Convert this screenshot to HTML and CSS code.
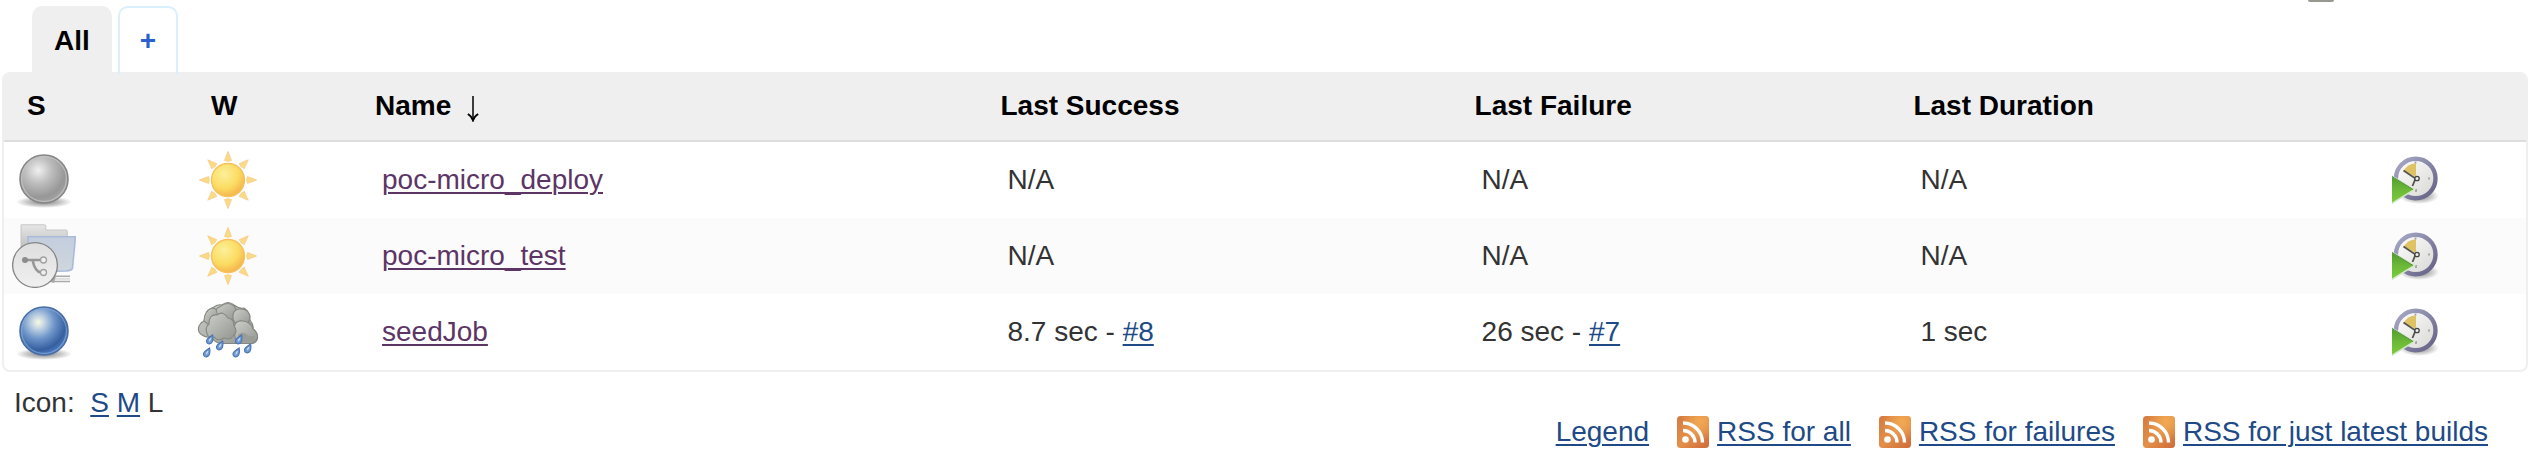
FILE: index.html
```html
<!DOCTYPE html>
<html lang="en">
<head>
<meta charset="utf-8">
<title>All jobs</title>
<link rel="stylesheet" href="styles.css">
</head>
<body>
<svg class="defs" width="0" height="0" aria-hidden="true">
  <defs>
    <radialGradient id="grayBall" cx="38%" cy="32%" r="70%"><stop offset="0" stop-color="#f0f0f0"/><stop offset=".4" stop-color="#bdbdbd"/><stop offset=".8" stop-color="#979797"/><stop offset="1" stop-color="#a4a4a4"/></radialGradient>
    <radialGradient id="blueBall" cx="38%" cy="32%" r="70%"><stop offset="0" stop-color="#fafae4"/><stop offset=".2" stop-color="#c0d2e2"/><stop offset=".48" stop-color="#6f96ca"/><stop offset=".82" stop-color="#355f9f"/><stop offset="1" stop-color="#4c7cc0"/></radialGradient>
    <radialGradient id="shade"><stop offset="0" stop-color="#000" stop-opacity=".5"/><stop offset=".6" stop-color="#000" stop-opacity=".22"/><stop offset="1" stop-color="#000" stop-opacity="0"/></radialGradient>
    <radialGradient id="sunCore" cx="38%" cy="32%" r="72%"><stop offset="0" stop-color="#fbf09a"/><stop offset=".6" stop-color="#fbdc62"/><stop offset="1" stop-color="#f5b04c"/></radialGradient>
    <linearGradient id="tabGray" x1="0" y1="0" x2="0" y2="1"><stop offset="0" stop-color="#e6e6e6"/><stop offset="1" stop-color="#b4b4b4"/></linearGradient>
    <linearGradient id="panel" x1="0" y1="0" x2="0" y2="1"><stop offset="0" stop-color="#c3cddd"/><stop offset="1" stop-color="#d0d6dd"/></linearGradient>
    <linearGradient id="disc" x1="0" y1="0" x2="0" y2="1"><stop offset="0" stop-color="#dedede"/><stop offset="1" stop-color="#f0f0f0"/></linearGradient>
    <linearGradient id="puff" x1="0" y1="0" x2="1" y2="1"><stop offset="0" stop-color="#cdcfcb"/><stop offset="1" stop-color="#92958f"/></linearGradient>
    <linearGradient id="ring" x1="0" y1="0" x2="1" y2="1"><stop offset="0" stop-color="#a9abc8"/><stop offset="1" stop-color="#625f83"/></linearGradient>
    <linearGradient id="face" x1="0" y1="0" x2="1" y2="1"><stop offset="0" stop-color="#ffffff"/><stop offset="1" stop-color="#d6d6d3"/></linearGradient>
    <linearGradient id="play" x1="0" y1="0" x2="0" y2="1"><stop offset="0" stop-color="#4f9a2c"/><stop offset=".5" stop-color="#6cb838"/><stop offset="1" stop-color="#7ccf3c"/></linearGradient>
    <linearGradient id="feed" x1="0" y1="0" x2="1" y2="1"><stop offset="0" stop-color="#d47a40"/><stop offset=".5" stop-color="#e39049"/><stop offset="1" stop-color="#cf6a3a"/></linearGradient>
    <radialGradient id="feedGlow" cx="72%" cy="18%" r="60%"><stop offset="0" stop-color="#f2a953"/><stop offset="1" stop-color="#f2a953" stop-opacity="0"/></radialGradient>
  </defs>
  <symbol id="ball-gray" viewBox="0 0 64 64">
    <ellipse cx="32" cy="54" rx="28" ry="6" fill="url(#shade)"/>
    <circle cx="32" cy="31" r="24" fill="url(#grayBall)" stroke="#868686" stroke-width="1.6"/>
    <circle cx="32" cy="31" r="22.4" fill="none" stroke="#c9c9c9" stroke-width="1.2" opacity=".7"/>
  </symbol>
  <symbol id="ball-blue" viewBox="0 0 64 64">
    <ellipse cx="32" cy="54" rx="28" ry="6" fill="url(#shade)"/>
    <circle cx="32" cy="31" r="24" fill="url(#blueBall)" stroke="#4a6ea6" stroke-width="1.6"/>
    <circle cx="32" cy="31" r="22.4" fill="none" stroke="#86a9d8" stroke-width="1.2" opacity=".75"/>
  </symbol>
  <symbol id="folder" viewBox="0 0 64 64">
    <path d="M9 .8H32.500Q33.800 .8 33.800 2V6H54Q55.300 6 55.300 7.300V30H9z" fill="url(#tabGray)" stroke="#c6c6c6"/>
    <path d="M40 52.300H58M42 57.500H58" stroke="#aaaaaa" stroke-width="1.600"/>
    <path d="M40 54.800H58" stroke="#dedede" stroke-width="2"/>
    <path d="M36 50l8 2-2 7-8-2z" fill="#a8a8a8"/>
    <path d="M16 12.800H63.500L60.500 44Q60 46.500 54 47L17 48z" fill="url(#panel)" stroke="#a9bbdb" stroke-width="1.600"/>
    <circle cx="23" cy="41" r="22.400" fill="url(#disc)" stroke="#858585" stroke-width="1.300"/>
    <path d="M13 36H28M20.500 36Q23 48 29 48.500" fill="none" stroke="#969696" stroke-width="2.600"/>
    <circle cx="13" cy="36" r="3" fill="#8c8c8c"/>
    <circle cx="31.500" cy="36" r="3" fill="#f0f0f0" stroke="#a0a0a0" stroke-width="1.300"/>
    <circle cx="31.500" cy="48.500" r="3" fill="#f0f0f0" stroke="#a0a0a0" stroke-width="1.300"/>
  </symbol>
  <symbol id="ray" viewBox="0 0 64 64"><path d="M32 3.500L28.600 12.500Q32 14 35.400 12.500z" fill="#fadb85" stroke="#f9d08c" stroke-width="1" stroke-linejoin="round"/></symbol>
  <symbol id="sun" viewBox="0 0 64 64">
    <use href="#ray"/><use href="#ray" transform="rotate(45 32 32)"/><use href="#ray" transform="rotate(90 32 32)"/><use href="#ray" transform="rotate(135 32 32)"/><use href="#ray" transform="rotate(180 32 32)"/><use href="#ray" transform="rotate(225 32 32)"/><use href="#ray" transform="rotate(270 32 32)"/><use href="#ray" transform="rotate(315 32 32)"/>
    <circle cx="32" cy="32" r="16.500" fill="url(#sunCore)" stroke="#f5c25c" stroke-width="1.400"/>
  </symbol>
  <symbol id="drop" viewBox="0 0 10 12"><path d="M8.500 1Q9.500 7 7.500 9.500 5 12 2.500 10 .5 7.500 3 5 5.500 3 8.500 1z" fill="#6f9ad2" stroke="#4873b5" stroke-width="1.200"/><path d="M6.800 4.500Q5 6 5 8" stroke="#c9dcf2" stroke-width="1.500" fill="none"/></symbol>
  <symbol id="rain" viewBox="0 0 64 64">
    <g fill="url(#puff)" stroke="#858882" stroke-width="1.100">
      <path d="M6 35Q1 32 3 26 5 22 8 21 10 10 18 7 22 4 26 5 32 0 38 5 43 9 48 8 54 12 54 20 58 25 57 29 62 33 61.500 38 60 44 54 43.500H24Q18 42 15 37 10 38 6 35z"/>
      <path d="M19 17Q17 9 25 6 32 1 38 6 42 10 38 18 32 23 25 20z"/>
      <path d="M37 19Q36 10 43 9 52 8 54 16 54 23 48 26 40 27 37 19z"/>
      <path d="M8 21Q8 11 16 8 22 8 21 16 15 20 13 25z"/>
      <path d="M38 29Q38 20 47 21 55 22 57 29 62 33 61.500 38 60 43.500 54 43.500H40z"/>
      <path d="M12 36Q8 28 13 24 13 14 21 15 27 10 32 18 38 19 38 26 42 31 38 35 34 41 28 38 22 42 18 37 15 38 12 36z"/>
    </g>
    <path d="M42 35Q46 31 50 34 53 37 59 36 60 42 54 42.500H43z" fill="#9a9d97"/>
    <use href="#drop" x="9" y="34" width="9" height="11"/><use href="#drop" x="19" y="40" width="9" height="11"/><use href="#drop" x="38" y="34" width="9" height="11"/><use href="#drop" x="47" y="43" width="9" height="11"/><use href="#drop" x="6" y="47" width="9" height="11"/><use href="#drop" x="35.500" y="47" width="9" height="11"/>
  </symbol>
  <symbol id="clock" viewBox="0 0 48 48">
    <ellipse cx="27" cy="40" rx="20" ry="8" fill="url(#shade)"/>
    <circle cx="23.700" cy="22.500" r="19.800" fill="url(#face)" stroke="url(#ring)" stroke-width="4.400"/>
    <path d="M11.500 14.500Q17 7 24 7.500V21z" fill="#dfc363"/>
    <path d="M11.500 14.500L23.500 22.500 20.500 30" fill="none" stroke="#55554e" stroke-width="1.800"/>
    <circle cx="25" cy="22.500" r="2.200" fill="#eee" stroke="#44443f" stroke-width="1.300"/>
    <path d="M37 21.500v2M23.500 5.500v2M24 33v3" stroke="#a2a29d" stroke-width="1.800"/>
    <path d="M-1 19.500L22.500 33.500-1 48z" fill="url(#play)" stroke="#d6e6cb" stroke-width="1.500"/>
    <path d="M0 20.500L21 33.500" stroke="#4a8a30" stroke-width="1"/>
  </symbol>
  <symbol id="rss" viewBox="0 0 32 32">
    <rect width="32" height="32" rx="3.500" fill="url(#feed)"/>
    <rect width="32" height="32" rx="3.500" fill="url(#feedGlow)"/>
    <circle cx="8.500" cy="23.500" r="3.300" fill="#fff"/>
    <path d="M6 14.500A12 12 0 0 1 18 26.500M6 7A19.500 19.500 0 0 1 25.500 26.500" fill="none" stroke="#fff" stroke-width="3.400"/>
  </symbol>
</svg>

<header class="top"><span class="handle"></span></header>

<main class="view">
  <nav class="tabs" aria-label="Views">
    <span class="tab tab-active">All</span>
    <a class="tab tab-new" href="#new" title="New View">+</a>
  </nav>

  <div class="pane">
    <table class="jobs">
      <colgroup><col class="c-status"><col class="c-weather"><col class="c-name"><col class="c-success"><col class="c-failure"><col class="c-duration"><col></colgroup>
      <thead>
        <tr><th>S</th><th>W</th><th><span class="sorted">Name <svg class="sort" viewBox="0 0 12 26" role="img" aria-label="sorted descending"><path d="M6 0V24" stroke="#000" stroke-width="1.500"/><path d="M.8 18Q4.500 20 6 24.500 7.500 20 11.200 18" fill="none" stroke="#000" stroke-width="1.800"/></svg></span></th><th>Last Success</th><th>Last Failure</th><th>Last Duration</th><th></th></tr>
      </thead>
      <tbody>
        <tr>
          <td class="pic"><svg class="icon"><use href="#ball-gray"/></svg></td>
          <td class="pic"><svg class="icon"><use href="#sun"/></svg></td>
          <td><a class="job" href="#deploy">poc-micro_deploy</a></td>
          <td>N/A</td><td>N/A</td><td>N/A</td>
          <td><button class="build" aria-label="Build poc-micro_deploy"><svg><use href="#clock"/></svg></button></td>
        </tr>
        <tr>
          <td class="pic"><svg class="icon"><use href="#folder"/></svg></td>
          <td class="pic"><svg class="icon"><use href="#sun"/></svg></td>
          <td><a class="job" href="#test">poc-micro_test</a></td>
          <td>N/A</td><td>N/A</td><td>N/A</td>
          <td><button class="build" aria-label="Build poc-micro_test"><svg><use href="#clock"/></svg></button></td>
        </tr>
        <tr>
          <td class="pic"><svg class="icon"><use href="#ball-blue"/></svg></td>
          <td class="pic"><svg class="icon"><use href="#rain"/></svg></td>
          <td><a class="job" href="#seed">seedJob</a></td>
          <td>8.7 sec - <a href="#8">#8</a></td><td>26 sec - <a href="#7">#7</a></td><td>1 sec</td>
          <td><button class="build" aria-label="Build seedJob"><svg><use href="#clock"/></svg></button></td>
        </tr>
      </tbody>
    </table>
  </div>

  <footer class="foot">
    <div class="sizes">Icon:&nbsp; <a href="#s">S</a> <a href="#m">M</a> L</div>
    <div class="feeds">
      <a href="#legend">Legend</a>
      <span class="feed"><svg><use href="#rss"/></svg><a href="#all">RSS for all</a></span>
      <span class="feed"><svg><use href="#rss"/></svg><a href="#failures">RSS for failures</a></span>
      <span class="feed"><svg><use href="#rss"/></svg><a href="#latest">RSS for just latest builds</a></span>
    </div>
  </footer>
</main>
</body>
</html>
```
FILE: styles.css
```css
* { box-sizing: border-box; }
body {
  margin: 0;
  background: #fff;
  color: #333;
  font: 28px/32px "Liberation Sans", Arial, sans-serif;
}
.defs { display: block; }
a {
  color: #204a87;
  text-decoration-line: underline;
  text-decoration-thickness: 2px;
  text-underline-offset: 3px;
}
.top {
  display: flex;
  justify-content: flex-end;
  height: 2px;
  padding-right: 198px;
}
.handle {
  width: 26px;
  background: #999991;
  border-radius: 0 0 2px 2px;
}
.view { padding: 4px 4px 0 2px; }
.tabs {
  display: flex;
  gap: 6px;
  padding-left: 30px;
  margin-bottom: -2px;
  position: relative;
}
.tab {
  padding: 16px 20px;
  border: 2px solid #efefef;
  border-bottom: 0;
  border-radius: 10px 10px 0 0;
  font-weight: bold;
  height: 68px;
  line-height: 34px;
}
.tab-active { background: #efefef; color: #000; }
.tab-new {
  border-color: #d9effc;
  background: linear-gradient(#fff 64px, #efefef 64px);
  color: #2a60d0;
  text-decoration: none;
}
.pane {
  border: 2px solid #efefef;
  border-radius: 8px;
  overflow: hidden;
}
.jobs {
  width: 100%;
  table-layout: fixed;
  border-collapse: separate;
  border-spacing: 0;
}
.c-status { width: 7.3%; }
.c-weather { width: 6.5%; }
.c-name { width: 24.8%; }
.c-success { width: 18.8%; }
.c-failure { width: 17.4%; }
.c-duration { width: 18.7%; }
.jobs th {
  padding: 16px 0 18px 23px;
  background: #efefef;
  border-bottom: 2px solid #ddd;
  color: #000;
  text-align: left;
}
.sorted {
  display: flex;
  align-items: flex-end;
  gap: 16px;
}
.sort {
  width: 12px;
  height: 26px;
}
.jobs td { padding: 6px 0 6px 30px; }
.jobs td.pic { padding-left: 8px; }
.jobs tbody tr:nth-child(even) { background: #fbfbfb; }
.icon {
  display: block;
  width: 64px;
  height: 64px;
}
.job { color: #5c3566; }
.build {
  display: block;
  padding: 0;
  border: 0;
  background: none;
  cursor: pointer;
}
.build svg {
  display: block;
  width: 48px;
  height: 48px;
}
.foot {
  display: flex;
  justify-content: space-between;
  padding: 14px 40px 0 12px;
}
.sizes { padding-top: 1px; }
.feeds {
  display: flex;
  gap: 28px;
  padding-top: 30px;
}
.feed {
  display: flex;
  gap: 8px;
}
.feed svg {
  width: 32px;
  height: 32px;
}
```
